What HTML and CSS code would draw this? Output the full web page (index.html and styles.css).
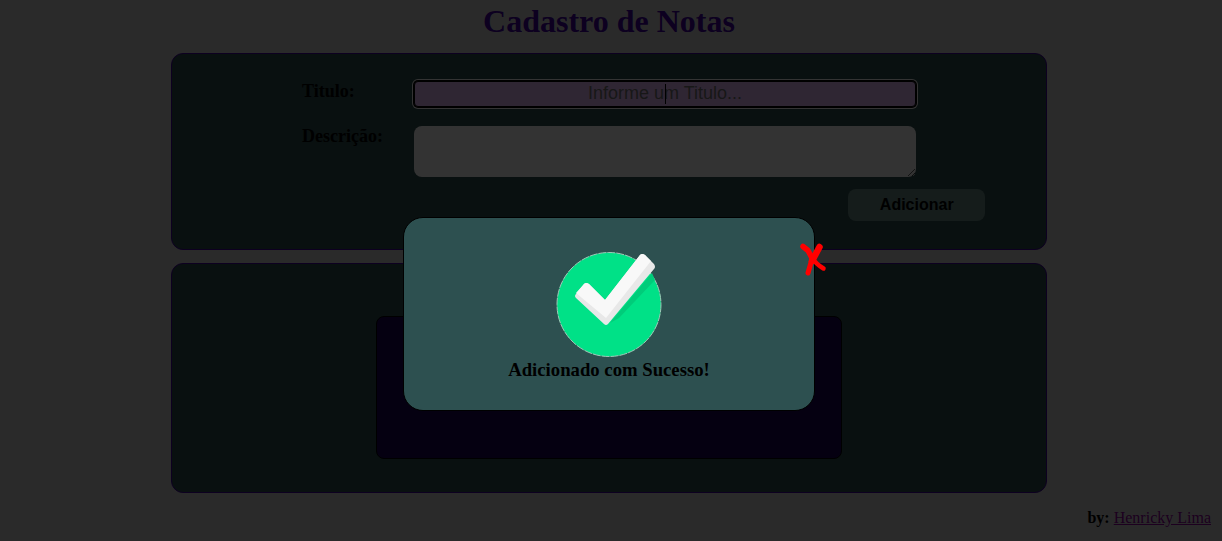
FILE: index.html
```html
<!DOCTYPE html>
<html lang="pt-BR">
<head>
<meta charset="utf-8">
<meta name="viewport" content="width=device-width, initial-scale=1">
<title>Cadastro de Notas</title>
<link rel="stylesheet" href="styles.css">
</head>
<body>
<div class="page">
  <h1 class="title">Cadastro de Notas</h1>
  <main class="content">
    <form class="panel form">
      <div class="fields">
        <label class="label" for="titulo">Titulo:</label>
        <div class="field">
          <input class="input" id="titulo" type="text" placeholder="Informe um Titulo...">
          <span class="caret"></span>
        </div>
        <label class="label" for="descricao">Descrição:</label>
        <textarea class="textarea" id="descricao"></textarea>
      </div>
      <button class="add" type="button">Adicionar</button>
    </form>
    <section class="panel notes">
      <div class="note"></div>
    </section>
  </main>
  <footer class="footer"><strong>by:</strong> <a class="author" href="#">Henricky Lima</a></footer>
</div>
<div class="overlay">
  <div class="modal" role="dialog" aria-labelledby="mensagem">
    <button class="close" type="button" aria-label="Fechar">
      <svg width="28" height="34" viewBox="0 0 28 34" fill="none" stroke="#f00" stroke-linecap="round" stroke-linejoin="round">
        <path d="M4 4.500L9 8.500L14 18" stroke-width="5.500"/>
        <path d="M20.500 5L13 19" stroke-width="6.500"/>
        <path d="M13 17Q11 24 9 31" stroke-width="5"/>
        <path d="M13 16Q17 22 24.500 26.500" stroke-width="4.500"/>
      </svg>
    </button>
    <svg class="check" width="106" height="106" viewBox="0 0 106 106">
      <circle cx="53" cy="52.500" r="52" fill="#00e187" stroke="#9fc9b8" stroke-width="1" stroke-dasharray="8 1"/>
      <path d="M54 71L96 21L99 28L63 66Z" fill="#00cc7a"/>
      <path d="M20 42L28 32Q30 30 33 32L49 48L84 3Q86 1 89 3L98 12Q100 15 98 17L52 72Q50 74 48 72L20 46Q18 44 20 42Z" fill="#e8e8e8"/>
      <path d="M20 41L28 32Q30 30 33 32L49 48L84 3Q86 1 89 3L95 9L50 66L20 41Z" fill="#f8f8f8"/>
    </svg>
    <h3 class="message" id="mensagem">Adicionado com Sucesso!</h3>
  </div>
</div>
</body>
</html>
```
FILE: styles.css
```css
* {
  box-sizing: border-box;
}

body {
  margin: 0;
  background: #d3d3d3;
  color: #000;
  font-family: "Liberation Serif", "Times New Roman", serif;
  font-size: 16px;
}

.page {
  padding: 3px 4px 0 0;
}

.title {
  margin: 0 0 14px;
  color: #4000a0;
  font-size: 32px;
  line-height: 36px;
  text-align: center;
}

.content {
  display: flex;
  flex-direction: column;
  align-items: center;
  gap: 13px;
}

.panel {
  display: flex;
  flex-direction: column;
  align-items: center;
  width: 72%;
  border: 1px solid #4000a0;
  border-radius: 12px;
  background: #2f4f4f;
}

.form {
  padding: 27px 0 28px;
}

.fields {
  display: grid;
  grid-template-columns: 112px 1fr;
  row-gap: 19px;
  width: 614px;
  max-width: 90%;
}

.label {
  font-size: 18px;
  font-weight: bold;
  line-height: 20px;
}

.field {
  position: relative;
  display: flex;
}

.input {
  width: 100%;
  height: 26px;
  margin: 0;
  padding: 0 4px 2px;
  border: 1px solid #000;
  border-radius: 4px;
  outline: 0;
  background: #ebbeff;
  box-shadow: 0 0 0 1px #000, 0 0 0 2px #fff;
  font-family: "Liberation Sans", Arial, sans-serif;
  font-size: 18px;
  text-align: center;
}

.input::placeholder {
  color: #757575;
  opacity: 1;
}

.caret {
  position: absolute;
  top: 3px;
  left: 50%;
  width: 1px;
  height: 20px;
  background: #000;
}

.textarea {
  width: 100%;
  height: 51px;
  margin: 0;
  padding: 4px;
  border: 0;
  border-radius: 8px;
  background: #fff;
  font-family: "Liberation Sans", Arial, sans-serif;
  font-size: 18px;
  resize: both;
}

.add {
  align-self: flex-end;
  width: 137px;
  height: 32px;
  margin: 12px 7% 0 0;
  padding: 0;
  border: 0;
  border-radius: 8px;
  background: #698c87;
  color: #000;
  font-family: "Liberation Sans", Arial, sans-serif;
  font-size: 16px;
  font-weight: bold;
}

.notes {
  padding: 52px 0 33px;
}

.note {
  width: 466px;
  max-width: 90%;
  height: 143px;
  border: 1px solid #000;
  border-radius: 8px;
  background: #190055;
}

.footer {
  padding: 16px 7px 14px 0;
  line-height: 18px;
  text-align: right;
}

.author {
  color: #8b0099;
}

.overlay {
  position: fixed;
  inset: 0;
  display: flex;
  align-items: flex-start;
  justify-content: center;
  padding: 217px 4px 0 0;
  background: rgba(0, 0, 0, 0.8);
}

.modal {
  position: relative;
  display: flex;
  flex-direction: column;
  align-items: center;
  width: 412px;
  max-width: 90%;
  padding: 34px 16px 29px;
  border: 1px solid #000;
  border-radius: 20px;
  background: #2d5050;
}

.check {
  display: block;
}

.message {
  margin: 0;
  line-height: 23px;
}

.close {
  position: absolute;
  top: 24px;
  right: -13px;
  padding: 0;
  border: 0;
  background: none;
  line-height: 0;
}
```
